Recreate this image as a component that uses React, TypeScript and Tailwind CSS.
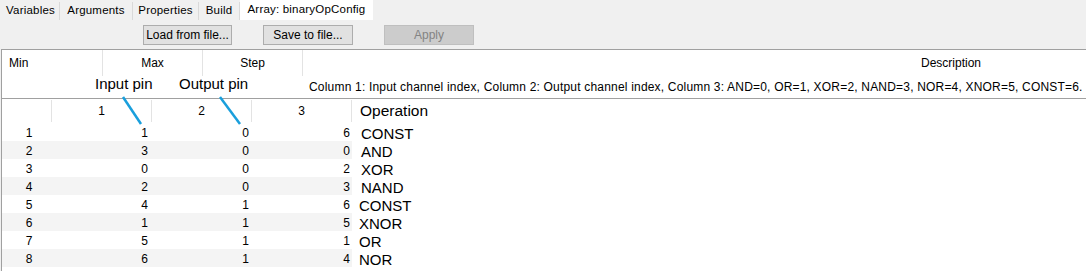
import React from "react";

const rows = [
  [1, 1, 0, 6, "CONST"],
  [2, 3, 0, 0, "AND"],
  [3, 0, 0, 2, "XOR"],
  [4, 2, 0, 3, "NAND"],
  [5, 4, 1, 6, "CONST"],
  [6, 1, 1, 5, "XNOR"],
  [7, 5, 1, 1, "OR"],
  [8, 6, 1, 4, "NOR"],
] as const;

const tabs = [
  { label: "Variables", w: "w-[58px]" },
  { label: "Arguments", w: "w-[73px]" },
  { label: "Properties", w: "w-[66px]" },
  { label: "Build", w: "w-[41px]" },
];

export default function App() {
  return (
    <div className="relative w-[1086px] h-[271px] overflow-hidden bg-[#f0f0f0] text-[12px] leading-none text-black font-['Liberation_Sans',Arial,sans-serif]">
      {/* Tabs */}
      <div className="flex h-[20px] items-end pl-[2px]">
        {tabs.map((t) => (
          <div
            key={t.label}
            className={`${t.w} h-[18px] flex items-center justify-center border-r border-[#d9d9d9] bg-[#f0f0f0] text-[11.5px] tracking-[0.2px]`}
          >
            {t.label}
          </div>
        ))}
        <div className="w-[133px] h-[20px] flex items-center justify-center bg-white text-[11.5px] tracking-[0.2px] pb-[1px]">
          Array: binaryOpConfig
        </div>
      </div>

      {/* Toolbar */}
      <div className="flex h-[29px] items-start pt-[5px] pl-[143px]">
        <button className="w-[89px] h-[20px] border border-[#adadad] bg-[#e1e1e1] text-[12px] flex items-center justify-center">
          Load from file...
        </button>
        <button className="ml-[31px] w-[90px] h-[20px] border border-[#adadad] bg-[#e1e1e1] text-[12px] flex items-center justify-center">
          Save to file...
        </button>
        <button className="ml-[31px] w-[90px] h-[20px] border border-[#bfbfbf] bg-[#cccccc] text-[#838383] text-[12px] flex items-center justify-center">
          Apply
        </button>
      </div>

      {/* Panel */}
      <div className="ml-[1px] h-[222px] border-t border-l border-[#a0a0a0] bg-white overflow-hidden">
        {/* Property header */}
        <div className="h-[49px] border-b border-[#a0a0a0]">
          <div className="flex h-[26px]">
            <div className="w-[101px] shrink-0 pl-[7px] flex items-center border-r border-[#e3e3e3]">Min</div>
            <div className="w-[100px] shrink-0 flex items-center justify-center border-r border-[#e3e3e3]">Max</div>
            <div className="w-[100px] shrink-0 flex items-center justify-center border-r border-[#e3e3e3]">Step</div>
            <div className="w-[1296px] shrink-0 flex items-center justify-center">Description</div>
          </div>
          <div className="h-[22px] flex items-center pl-[307px] whitespace-nowrap tracking-[0.19px]">
            Column 1: Input channel index, Column 2: Output channel index, Column 3: AND=0, OR=1, XOR=2, NAND=3, NOR=4, XNOR=5, CONST=6.
          </div>
        </div>

        {/* Table header */}
        <div className="flex h-[24px] items-stretch">
          <div className="w-[50px] shrink-0 border-r border-[#e3e3e3] my-[1px]" />
          <div className="w-[100px] shrink-0 flex items-center justify-center border-r border-[#e3e3e3] my-[1px]">1</div>
          <div className="w-[100px] shrink-0 flex items-center justify-center border-r border-[#e3e3e3] my-[1px]">2</div>
          <div className="w-[100px] shrink-0 flex items-center justify-center border-r border-[#e3e3e3] my-[1px]">3</div>
          <div className="flex items-center pl-[8px] text-[15.5px] font-['Arial','Liberation_Sans',sans-serif]">Operation</div>
        </div>

        {/* Rows */}
        {rows.map((r, i) => (
          <div key={i} className="flex h-[18px]">
            <div className={`flex w-[350px] shrink-0 ${i % 2 === 1 ? "bg-[#f4f4f4]" : "bg-white"}`}>
              <div className="w-[50px] flex items-center justify-center pt-[2px] pl-[4px]">{r[0]}</div>
              <div className="w-[100px] flex items-center justify-end pr-[4px] pt-[2px]">{r[1]}</div>
              <div className="w-[100px] flex items-center justify-end pr-[3px] pt-[2px]">{r[2]}</div>
              <div className="w-[100px] flex items-center justify-end pr-[2px] pt-[2px]">{r[3]}</div>
            </div>
            <div
              className={`flex items-center pt-[3px] text-[15px] font-['Arial','Liberation_Sans',sans-serif] ${i < 4 ? "pl-[9px]" : "pl-[7px]"}`}
            >
              {r[4]}
            </div>
          </div>
        ))}
      </div>

      {/* Annotations */}
      <div className="absolute left-[95px] top-[75px] text-[15px] leading-[17px] font-['Arial','Liberation_Sans',sans-serif]">Input pin</div>
      <div className="absolute left-[179px] top-[75px] text-[15px] leading-[17px] font-['Arial','Liberation_Sans',sans-serif]">Output pin</div>
      <svg className="absolute left-0 top-0" width="1086" height="271" viewBox="0 0 1086 271">
        <line x1="123" y1="97" x2="141" y2="124" stroke="#1a9fdc" strokeWidth="2.5" />
        <line x1="220" y1="97" x2="240" y2="124" stroke="#1a9fdc" strokeWidth="2.5" />
      </svg>
    </div>
  );
}
